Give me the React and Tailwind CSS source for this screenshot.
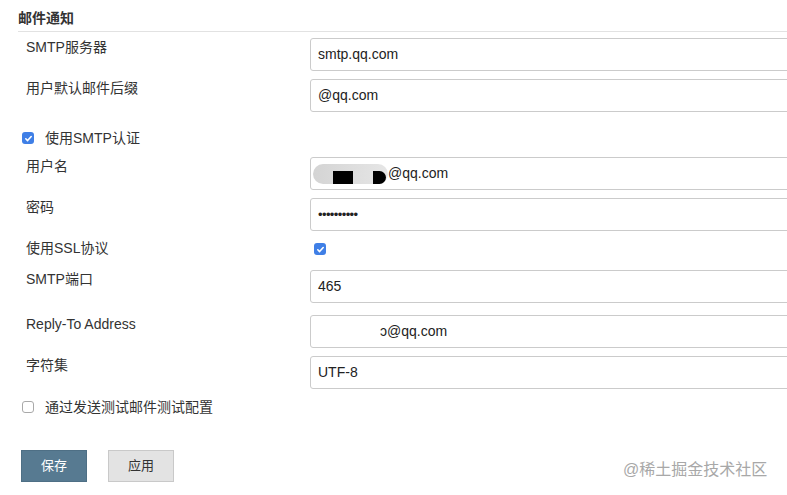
import React from 'react';

const font = { fontFamily: '"Liberation Sans", "Noto Sans CJK SC", sans-serif' };

function Checked({ className = '' }) {
  return (
    <span className={`inline-flex shrink-0 w-[12px] h-[12px] rounded-[3px] bg-[#3f7fe6] items-center justify-center ${className}`}>
      <svg width="9" height="9" viewBox="0 0 10 10" fill="none" stroke="white" strokeWidth="1.8" strokeLinecap="round" strokeLinejoin="round">
        <path d="M2 5.3l2 2L8 2.8" />
      </svg>
    </span>
  );
}

function Unchecked({ className = '' }) {
  return <span className={`inline-block shrink-0 w-[12px] h-[12px] rounded-[3px] border border-[#a9a9a9] bg-white ${className}`} />;
}

function Field({ label, className = '', children }) {
  return (
    <div className={`flex pl-[26px] ${className}`}>
      <div className="w-[284px] shrink-0 text-[14px] leading-[18px] text-[#333]">{label}</div>
      <div className="w-[490px] h-[33px] shrink-0 border border-[#cbcbcb] rounded-[3px] bg-white flex items-center text-[14px] text-[#222]">
        {children}
      </div>
    </div>
  );
}

export default function App() {
  return (
    <div className="relative w-[787px] h-[495px] overflow-hidden bg-white" style={font}>
      <div className="pt-[9px] pl-[18px] text-[14px] leading-[18px] font-bold text-[#333]">邮件通知</div>
      <div className="ml-[18px] mt-[4px] border-t border-[#e2e2e2]" />

      <Field label="SMTP服务器" className="mt-[6px]">
        <span className="pl-[7px]">smtp.qq.com</span>
      </Field>
      <Field label="用户默认邮件后缀" className="mt-[8px]">
        <span className="pl-[7px]">@qq.com</span>
      </Field>

      <div className="mt-[17px] pl-[22px] flex items-center h-[18px] gap-[11px] text-[14px] text-[#333]">
        <Checked />
        <span>使用SMTP认证</span>
      </div>

      <Field label="用户名" className="mt-[10px]">
        <span className="relative ml-[2px] w-[75px] h-[20px] rounded-full bg-gradient-to-r from-[#d4d4d4] to-[#e6e6e6]">
          <span className="absolute left-[20px] top-[7px] w-[20px] h-[13px] bg-black" />
          <span className="absolute left-[60px] top-[7px] w-[13px] h-[13px] bg-black rounded-r-full" />
        </span>
        <span>@qq.com</span>
      </Field>
      <Field label="密码" className="mt-[8px]">
        <span className="pl-[7px] text-[13px] tracking-[-0.6px]">••••••••••</span>
      </Field>

      <div className="mt-[8px] flex pl-[26px] h-[18px] items-center">
        <div className="w-[288px] shrink-0 text-[14px] leading-[18px] text-[#333]">使用SSL协议</div>
        <Checked className="mt-[2px]" />
      </div>

      <Field label="SMTP端口" className="mt-[13px]">
        <span className="pl-[7px]">465</span>
      </Field>
      <Field label="Reply-To Address" className="mt-[12px]">
        <span className="pl-[69px]">ɔ@qq.com</span>
      </Field>
      <Field label="字符集" className="mt-[8px]">
        <span className="pl-[7px]">UTF-8</span>
      </Field>

      <div className="mt-[9px] pl-[22px] flex items-center h-[18px] gap-[11px] text-[14px] text-[#333]">
        <Unchecked />
        <span>通过发送测试邮件测试配置</span>
      </div>

      <div className="mt-[34px] pl-[21px] flex gap-[21px]">
        <button className="w-[66px] h-[32px] bg-[#577a91] border border-[#4e6f85] text-white text-[13px]">保存</button>
        <button className="w-[66px] h-[32px] bg-[#e3e3e3] border border-[#c9c9c9] text-[#333] text-[13px]">应用</button>
      </div>

      <div className="absolute left-[623px] top-[460px] text-[16px] leading-[20px] text-[#a8a8a8]">@稀土掘金技术社区</div>
    </div>
  );
}
